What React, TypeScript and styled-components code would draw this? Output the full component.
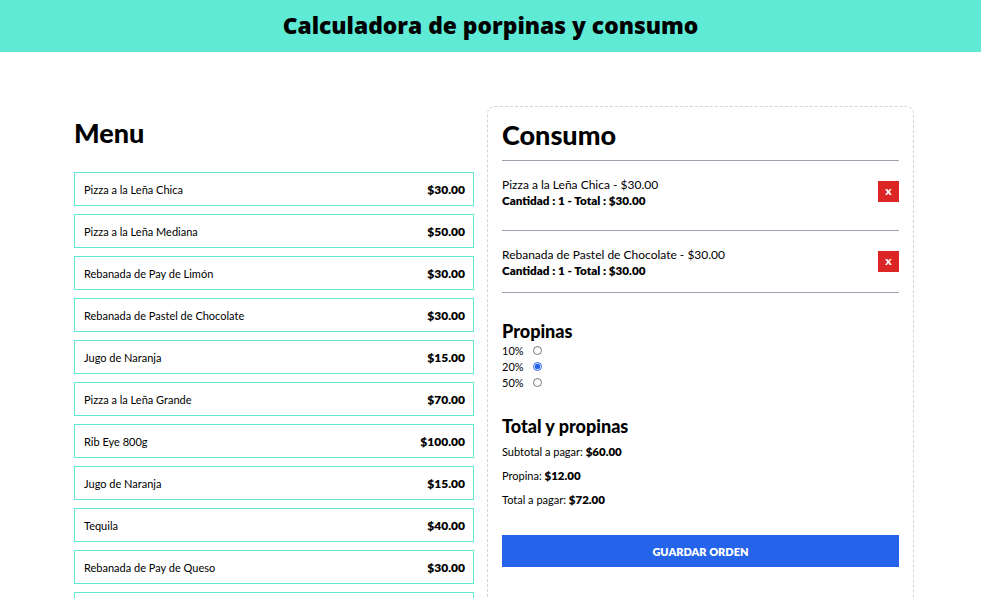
import styled, { createGlobalStyle } from 'styled-components'

type MenuItem = {
  id: number
  name: string
  price: number
}

type OrderItem = MenuItem & { quantity: number }

const menu: MenuItem[] = [
  { id: 1, name: 'Pizza a la Leña Chica', price: 30 },
  { id: 2, name: 'Pizza a la Leña Mediana', price: 50 },
  { id: 3, name: 'Rebanada de Pay de Limón', price: 30 },
  { id: 4, name: 'Rebanada de Pastel de Chocolate', price: 30 },
  { id: 5, name: 'Jugo de Naranja', price: 15 },
  { id: 6, name: 'Pizza a la Leña Grande', price: 70 },
  { id: 7, name: 'Rib Eye 800g', price: 100 },
  { id: 8, name: 'Jugo de Naranja', price: 15 },
  { id: 9, name: 'Tequila', price: 40 },
  { id: 10, name: 'Rebanada de Pay de Queso', price: 30 },
  { id: 11, name: 'Cerveza', price: 20 },
]

const order: OrderItem[] = [
  { id: 1, name: 'Pizza a la Leña Chica', price: 30, quantity: 1 },
  { id: 4, name: 'Rebanada de Pastel de Chocolate', price: 30, quantity: 1 },
]

const tipOptions = [
  { id: 'tip-10', value: 0.1, label: '10%' },
  { id: 'tip-20', value: 0.2, label: '20%' },
  { id: 'tip-50', value: 0.5, label: '50%' },
]

const formatCurrency = (amount: number) => `$${amount.toFixed(2)}`

const GlobalStyle = createGlobalStyle`
  * {
    box-sizing: border-box;
  }

  body {
    margin: 0;
    font-family: Lato, 'Open Sans', sans-serif;
    color: #000;
    background: #fff;
  }
`

export default function App() {
  const tip = 0.2
  const subtotal = order.reduce((total, item) => total + item.price * item.quantity, 0)
  const tipAmount = subtotal * tip

  return (
    <>
      <GlobalStyle />
      <Header>
        <Title>Calculadora de porpinas y consumo</Title>
      </Header>

      <Main>
        <div>
          <SectionTitle>Menu</SectionTitle>
          <MenuList>
            {menu.map((item) => (
              <MenuButton key={item.id}>
                <span>{item.name}</span>
                <Price>{formatCurrency(item.price)}</Price>
              </MenuButton>
            ))}
          </MenuList>
        </div>

        <OrderPanel>
          <SectionTitle>Consumo</SectionTitle>
          <OrderList>
            {order.map((item) => (
              <OrderRow key={item.id}>
                <div>
                  <OrderName>
                    {item.name} - {formatCurrency(item.price)}
                  </OrderName>
                  <OrderQty>
                    Cantidad : {item.quantity} - Total : {formatCurrency(item.price * item.quantity)}
                  </OrderQty>
                </div>
                <RemoveButton>x</RemoveButton>
              </OrderRow>
            ))}
          </OrderList>

          <TipSection>
            <SubTitle>Propinas</SubTitle>
            <form>
              {tipOptions.map((option) => (
                <TipOption key={option.id}>
                  <label htmlFor={option.id}>{option.label}</label>
                  <Radio
                    id={option.id}
                    type="radio"
                    name="tip"
                    value={option.value}
                    defaultChecked={option.value === tip}
                  />
                </TipOption>
              ))}
            </form>
          </TipSection>

          <Totals>
            <SubTitle>Total y propinas</SubTitle>
            <TotalLine>
              Subtotal a pagar: <strong>{formatCurrency(subtotal)}</strong>
            </TotalLine>
            <TotalLine>
              Propina: <strong>{formatCurrency(tipAmount)}</strong>
            </TotalLine>
            <TotalLine>
              Total a pagar: <strong>{formatCurrency(subtotal + tipAmount)}</strong>
            </TotalLine>
          </Totals>

          <SaveButton>Guardar orden</SaveButton>
        </OrderPanel>
      </Main>
    </>
  )
}

const Header = styled.header`
  display: flex;
  justify-content: center;
  align-items: center;
  height: 52px;
  background-color: #5eead4;
`

const Title = styled.h1`
  margin: 0;
  font-family: 'Open Sans', sans-serif;
  font-size: 22.8px;
  font-weight: 800;
  line-height: 1;
`

const Main = styled.main`
  display: grid;
  grid-template-columns: 400px 427px;
  column-gap: 13px;
  align-items: start;
  padding: 54px 0 40px 74px;
`

const SectionTitle = styled.h2`
  margin: 12px 0 24px;
  font-size: 27px;
  font-weight: 900;
  line-height: 30px;
`

const MenuList = styled.div`
  display: flex;
  flex-direction: column;
  row-gap: 8px;
`

const MenuButton = styled.button`
  display: flex;
  justify-content: space-between;
  align-items: center;
  width: 100%;
  height: 34px;
  padding: 0 8px 0 9px;
  border: 1.5px solid #5eead4;
  background: #fff;
  font-family: inherit;
  font-size: 11px;
  text-align: left;
  color: #000;
  cursor: pointer;
`

const Price = styled.span`
  font-size: 12px;
  font-weight: 800;
`

const OrderPanel = styled.section`
  padding: 1px 14px 60px;
  border: 1px dashed #d1d5db;
  border-radius: 8px;
`

const OrderList = styled.div`
  border-top: 1px solid #9ca3af;
  border-bottom: 1px solid #9ca3af;
  margin-top: -14px;
`

const OrderRow = styled.div`
  display: flex;
  justify-content: space-between;
  align-items: center;
  padding: 15px 0 14px;

  &:first-child {
    padding-bottom: 22px;
  }

  & + & {
    border-top: 1px solid #9ca3af;
  }
`

const OrderName = styled.p`
  margin: 0;
  font-size: 12px;
  line-height: 17px;
`

const OrderQty = styled.p`
  margin: 0;
  font-size: 11.7px;
  font-weight: 800;
  line-height: 15px;
`

const RemoveButton = styled.button`
  width: 21px;
  height: 21px;
  margin-top: -2px;
  padding: 0;
  border: none;
  background-color: #dc2626;
  color: #fff;
  font-family: inherit;
  font-size: 12px;
  font-weight: 900;
  line-height: 1;
`

const SubTitle = styled.h3`
  margin: 0;
  font-size: 18px;
  font-weight: 900;
  line-height: 22px;
`

const TipSection = styled.div`
  margin-top: 27px;
`

const TipOption = styled.div`
  display: flex;
  align-items: center;
  column-gap: 9px;
  height: 16px;
  font-size: 11px;
`

const Radio = styled.input`
  width: 9px;
  height: 9px;
  margin: 0;
  accent-color: #2563eb;
`

const Totals = styled.div`
  margin-top: 25px;
`

const TotalLine = styled.p`
  margin: 6px 0 0;
  font-size: 11px;
  line-height: 18px;

  & + & {
    margin-top: 6px;
  }

  strong {
    font-size: 11.5px;
    font-weight: 800;
  }
`

const SaveButton = styled.button`
  display: block;
  width: 100%;
  height: 32px;
  margin-top: 26px;
  border: none;
  background-color: #2563eb;
  color: #fff;
  font-family: inherit;
  font-size: 11px;
  font-weight: 800;
  text-transform: uppercase;
  cursor: pointer;
`
